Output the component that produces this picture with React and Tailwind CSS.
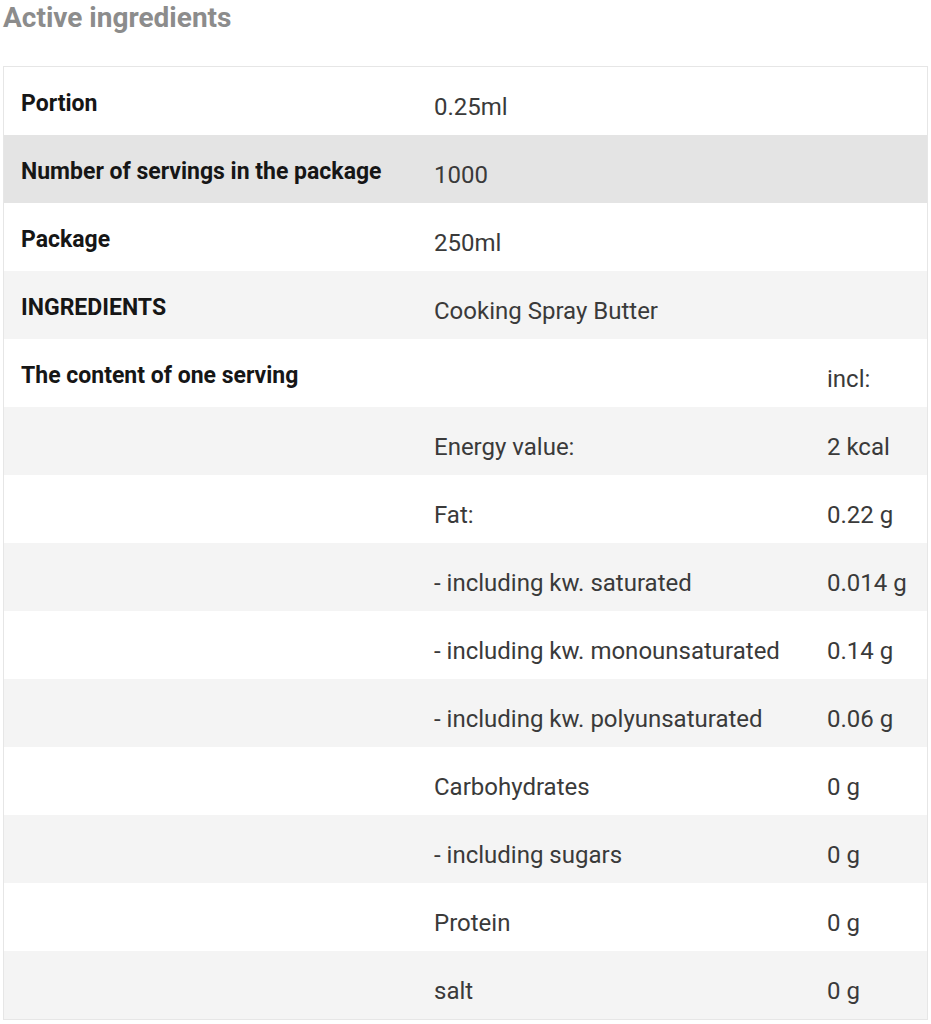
const rows = [
  { label: 'Portion', value: '0.25ml', extra: '', bg: 'bg-white' },
  { label: 'Number of servings in the package', value: '1000', extra: '', bg: 'bg-[#e4e4e4]' },
  { label: 'Package', value: '250ml', extra: '', bg: 'bg-white' },
  { label: 'INGREDIENTS', value: 'Cooking Spray Butter', extra: '', bg: 'bg-[#f4f4f4]' },
  { label: 'The content of one serving', value: '', extra: 'incl:', bg: 'bg-white' },
  { label: '', value: 'Energy value:', extra: '2 kcal', bg: 'bg-[#f4f4f4]' },
  { label: '', value: 'Fat:', extra: '0.22 g', bg: 'bg-white' },
  { label: '', value: '- including kw. saturated', extra: '0.014 g', bg: 'bg-[#f4f4f4]' },
  { label: '', value: '- including kw. monounsaturated', extra: '0.14 g', bg: 'bg-white' },
  { label: '', value: '- including kw. polyunsaturated', extra: '0.06 g', bg: 'bg-[#f4f4f4]' },
  { label: '', value: 'Carbohydrates', extra: '0 g', bg: 'bg-white' },
  { label: '', value: '- including sugars', extra: '0 g', bg: 'bg-[#f4f4f4]' },
  { label: '', value: 'Protein', extra: '0 g', bg: 'bg-white' },
  { label: '', value: 'salt', extra: '0 g', bg: 'bg-[#f4f4f4]' },
];

export default function App() {
  return (
    <div className="w-[931px] bg-white px-[3px] font-['Roboto',sans-serif]">
      <h2 className="h-[66px] pt-[1px] text-[28px] font-bold leading-[34px] text-[#8c8c8c]">
        Active ingredients
      </h2>

      {/* Table */}
      <div className="border border-[#e6e6e6]">
        {rows.map((row, i) => (
          <div
            key={i}
            className={`grid h-[68px] grid-cols-[411px_393px_1fr] items-center ${row.bg}`}
          >
            <div className="pl-[17px] pt-[6px] text-[23px] font-bold text-[#161616]">{row.label}</div>
            <div className="pl-[19px] pt-[12px] text-[24px] text-[#3a3a3a]">{row.value}</div>
            <div className="pl-[19px] pt-[12px] text-[24px] text-[#3a3a3a]">{row.extra}</div>
          </div>
        ))}
      </div>
    </div>
  );
}
